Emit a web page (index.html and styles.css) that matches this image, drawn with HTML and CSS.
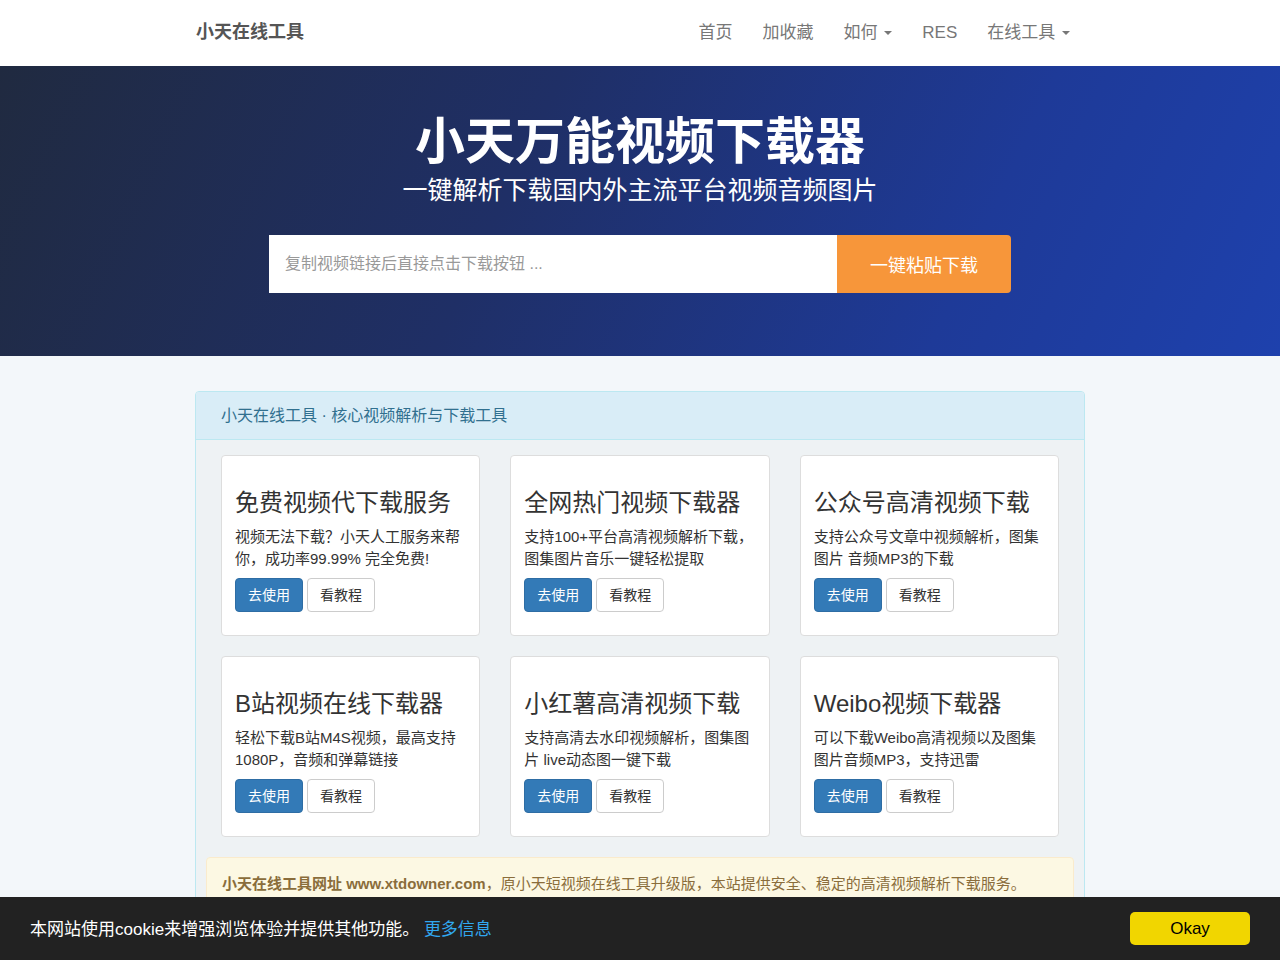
FILE: index.html
```html
<!DOCTYPE html>
<html lang="zh-CN">
<head>
	<meta charset="utf-8">
	<title>小天万能视频下载器 - 小天在线工具</title>
	<link rel="stylesheet" href="styles.css">
</head>
<body>

	<nav class="navbar">
		<div class="container navbar-inner">
			<a class="brand" href="#">小天在线工具</a>
			<ul class="nav">
				<li><a href="#">首页</a></li>
				<li><a href="#">加收藏</a></li>
				<li><a href="#">如何 <span class="caret"></span></a></li>
				<li><a href="#">RES</a></li>
				<li><a href="#">在线工具 <span class="caret"></span></a></li>
			</ul>
		</div>
	</nav>

	<header class="hero">
		<h1>小天万能视频下载器</h1>
		<p class="lead">一键解析下载国内外主流平台视频音频图片</p>
		<form class="search" onsubmit="return false">
			<input type="text" placeholder="复制视频链接后直接点击下载按钮 ...">
			<button type="submit">一键粘贴下载</button>
		</form>
	</header>

	<div class="container">
		<div class="panel">
			<div class="panel-heading">小天在线工具 · 核心视频解析与下载工具</div>
			<div class="panel-body">
				<div class="tools">
					<div class="thumbnail">
						<h3>免费视频代下载服务</h3>
						<p>视频无法下载？小天人工服务来帮你，成功率99.99% 完全免费!</p>
						<p class="actions"><a class="btn btn-primary" href="#">去使用</a><a class="btn btn-default" href="#">看教程</a></p>
					</div>
					<div class="thumbnail">
						<h3>全网热门视频下载器</h3>
						<p>支持100+平台高清视频解析下载，图集图片音乐一键轻松提取</p>
						<p class="actions"><a class="btn btn-primary" href="#">去使用</a><a class="btn btn-default" href="#">看教程</a></p>
					</div>
					<div class="thumbnail">
						<h3>公众号高清视频下载</h3>
						<p>支持公众号文章中视频解析，图集图片 音频MP3的下载</p>
						<p class="actions"><a class="btn btn-primary" href="#">去使用</a><a class="btn btn-default" href="#">看教程</a></p>
					</div>
					<div class="thumbnail">
						<h3>B站视频在线下载器</h3>
						<p>轻松下载B站M4S视频，最高支持1080P，音频和弹幕链接</p>
						<p class="actions"><a class="btn btn-primary" href="#">去使用</a><a class="btn btn-default" href="#">看教程</a></p>
					</div>
					<div class="thumbnail">
						<h3>小红薯高清视频下载</h3>
						<p>支持高清去水印视频解析，图集图片 live动态图一键下载</p>
						<p class="actions"><a class="btn btn-primary" href="#">去使用</a><a class="btn btn-default" href="#">看教程</a></p>
					</div>
					<div class="thumbnail">
						<h3>Weibo视频下载器</h3>
						<p>可以下载Weibo高清视频以及图集图片音频MP3，支持迅雷</p>
						<p class="actions"><a class="btn btn-primary" href="#">去使用</a><a class="btn btn-default" href="#">看教程</a></p>
					</div>
				</div>
			</div>
			<div class="alert">
				<strong>小天在线工具网址 www.xtdowner.com</strong>，原小天短视频在线工具升级版，本站提供安全、稳定的高清视频解析下载服务。
			</div>
		</div>
	</div>

	<div class="cookie-bar">
		<span class="cookie-text">本网站使用cookie来增强浏览体验并提供其他功能。 <a href="#">更多信息</a></span>
		<button class="cookie-ok" onclick="this.parentNode.style.display='none'">Okay</button>
	</div>

</body>
</html>
```
FILE: styles.css
```css
	*{
		box-sizing: border-box;
	}

	body{
		margin: 0;
		font-family: "Liberation Sans", Arial, "Noto Sans CJK SC", sans-serif;
		font-size: 15px;
		line-height: 1.42857;
		color: #333;
		background-color: #f3f7fa;
		padding-bottom: 90px;
	}

	a{
		text-decoration: none;
	}

	.container{
		width: 920px;
		margin: 0 auto;
		padding: 0 15px;
	}

	/* barra de navegação */
	.navbar{
		background: #fff;
		height: 66px;
	}

	.navbar-inner{
		display: flex;
		justify-content: space-between;
		align-items: center;
		height: 66px;
	}

	.brand{
		font-size: 18px;
		font-weight: bold;
		color: #555;
		margin-left: 1px;
	}

	.nav{
		list-style: none;
		margin: 0;
		padding: 0;
		display: flex;
	}

	.nav a{
		display: block;
		padding: 0 15px;
		font-size: 17px;
		color: #777;
	}

	.caret{
		display: inline-block;
		width: 0;
		height: 0;
		margin-left: 2px;
		vertical-align: middle;
		border-top: 4px solid #777;
		border-left: 4px solid transparent;
		border-right: 4px solid transparent;
	}

	/* topo */
	.hero{
		height: 290px;
		padding-top: 46px;
		text-align: center;
		color: #fff;
		background-image: linear-gradient(115deg, #202a40 0%, #1f2f66 40%, #1e3a98 75%, #1e41ad 100%);
	}

	.hero h1{
		margin: 0;
		font-size: 50px;
		line-height: 60px;
		font-weight: bold;
	}

	.hero .lead{
		margin: 0;
		font-size: 25px;
		line-height: 36px;
	}

	.search{
		display: flex;
		width: 742px;
		height: 58px;
		margin: 27px auto 0;
	}

	.search input{
		flex: 1;
		border: 0;
		padding: 0 16px;
		font-family: inherit;
		font-size: 16px;
		color: #555;
		outline: none;
	}

	.search input::placeholder{
		color: #999;
	}

	.search button{
		width: 174px;
		border: 0;
		border-radius: 0 4px 4px 0;
		background-color: #f7963a;
		color: #fff;
		font-family: inherit;
		font-size: 18px;
	}

	/* painel principal */
	.panel{
		margin-top: 35px;
		border: 1px solid #bce8f1;
		border-radius: 4px;
		background-color: #eef2f4;
		overflow: hidden;
	}

	.panel-heading{
		height: 48px;
		line-height: 47px;
		padding: 0 25px;
		font-size: 16px;
		color: #31708f;
		background-color: #d9edf7;
		border-bottom: 1px solid #bce8f1;
	}

	.panel-body{
		padding: 15px 25px 20px;
	}

	.tools{
		display: grid;
		grid-template-columns: repeat(3, 1fr);
		column-gap: 30px;
		row-gap: 20px;
	}

	.thumbnail{
		background: #fff;
		border: 1px solid #ddd;
		border-radius: 4px;
		padding: 14px 13px 13px;
		height: 181px;
	}

	.thumbnail h3{
		margin: 20px 0 10px;
		font-size: 24px;
		line-height: 26px;
		font-weight: normal;
		color: #333;
	}

	.thumbnail p{
		margin: 0 0 8px;
		font-size: 15px;
		line-height: 22px;
		color: #333;
	}

	.thumbnail .actions{
		display: flex;
		gap: 4px;
		margin: 0;
	}

	.btn{
		display: inline-block;
		height: 34px;
		line-height: 32px;
		padding: 0 12px;
		font-size: 14px;
		border: 1px solid transparent;
		border-radius: 4px;
	}

	.btn-primary{
		color: #fff;
		background-color: #337ab7;
		border-color: #2e6da4;
	}

	.btn-default{
		color: #333;
		background-color: #fff;
		border-color: #ccc;
	}

	.alert{
		margin: 0 10px 20px;
		padding: 15px;
		font-size: 15px;
		line-height: 22px;
		color: #8a6d3b;
		background-color: #fcf8e3;
		border: 1px solid #faebcc;
		border-radius: 4px;
	}

	/* aviso de cookies */
	.cookie-bar{
		position: fixed;
		left: 0;
		right: 0;
		bottom: 0;
		height: 63px;
		padding: 0 30px;
		display: flex;
		justify-content: space-between;
		align-items: center;
		background-color: #222;
		color: #fff;
		font-size: 17px;
	}

	.cookie-text{
		padding-top: 3px;
	}

	.cookie-text a{
		color: #31a8f0;
	}

	.cookie-ok{
		width: 120px;
		height: 33px;
		border: 0;
		border-radius: 5px;
		background-color: #f1d600;
		color: #000;
		font-family: inherit;
		font-size: 17px;
	}
```
